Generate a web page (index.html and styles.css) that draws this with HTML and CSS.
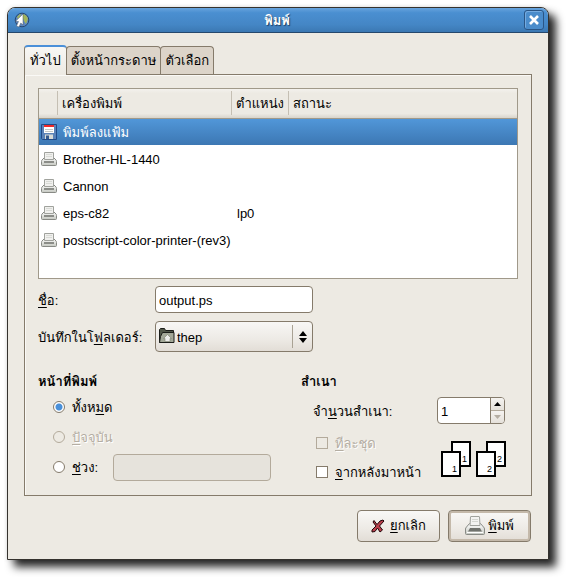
FILE: index.html
```html
<!DOCTYPE html>
<html lang="th">
<head>
<meta charset="utf-8">
<title>พิมพ์</title>
<link rel="stylesheet" href="styles.css">
</head>
<body>
<svg class="defs" aria-hidden="true">
  <defs>
    <linearGradient id="metal" x1="0" y1="0" x2="0" y2="1"><stop offset="0" stop-color="#fff"/><stop offset="1" stop-color="#c4c7c0"/></linearGradient>
    <symbol id="printer-small" viewBox="0 0 16 16">
      <path d="M3.500 6.500L1 9q-.5.5-.5 1.500v3q0 1 1 1h13q1 0 1-1v-3q0-1-.5-1.500l-2.500-2.500z" fill="url(#metal)" stroke="#888a85"/>
      <path d="M3.500 1.500h9v7h-9z" fill="#f0f0ee" stroke="#a0a29d"/>
      <path d="M5 3.500h6M5 5.500h6" stroke="#d8dad5"/>
      <path d="M3 11h10" stroke="#8b8d88" stroke-width="2"/>
    </symbol>
    <symbol id="printer" viewBox="0 0 20 20">
      <path d="M4.500 7.500L1.500 11q-1 1-1 2v4.500q0 1 1 1h17q1 0 1-1V13q0-1-1-2l-3-3.500z" fill="url(#metal)" stroke="#888a85"/>
      <path d="M5.500 1q0-.5.500-.5h8q.5 0 .5.500l.5 8.500H5z" fill="#f3f3f1" stroke="#a0a29d"/>
      <path d="M7 3.500h6M7 5.500h6" stroke="#d4d6d1"/>
      <path d="M5 12h10l2 3.500H3z" fill="#70726d"/>
      <path d="M2 16.500h16" stroke="#fff"/>
    </symbol>
  </defs>
</svg>
<main class="window">
  <header class="titlebar">
    <svg class="app-icon" viewBox="0 0 16 16" aria-hidden="true">
      <circle cx="8" cy="8" r="6.800" fill="#5b86c0" stroke="#26466f"/>
      <path d="M9 2q4 1 5 5l-2 5-2-3-1-3zM3 5l3-3 1 1-3 4z" fill="#a2b45a"/>
      <path d="M9 2L1.500 9.300l3 .2L2.500 14l2.500 1 1.800-4L9 13z" fill="#fff" stroke="#4a5563" stroke-width=".5"/>
    </svg>
    <h1>พิมพ์</h1>
    <button class="close" type="button" aria-label="ปิด">
      <svg viewBox="0 0 12 12" aria-hidden="true"><path d="M2 2l8 8M10 2l-8 8" stroke="#fff" stroke-width="2.600"/></svg>
    </button>
  </header>
  <form class="content">
    <div class="tabs" role="tablist">
      <button class="tab active" type="button" role="tab" aria-selected="true">ทั่วไป</button>
      <button class="tab" type="button" role="tab">ตั้งหน้ากระดาษ</button>
      <button class="tab" type="button" role="tab">ตัวเลือก</button>
    </div>
    <section class="panel">
      <div class="list">
        <table>
          <colgroup><col class="c-icon"><col class="c-name"><col class="c-place"><col></colgroup>
          <thead><tr><th></th><th>เครื่องพิมพ์</th><th>ตำแหน่ง</th><th>สถานะ</th></tr></thead>
          <tbody>
            <tr class="selected"><td><svg viewBox="0 0 16 16" aria-hidden="true">
              <path d="M.5.5h15v15h-14l-1-1z" fill="#5a82b8" stroke="#204a87"/>
              <path d="M3 1h10v8H3z" fill="#fff"/><path d="M3 1h10v2H3z" fill="#ef2929"/>
              <path d="M4 5.500h8M4 7.500h8" stroke="#c5c8c5"/><path d="M4 10.500h8V15H4z" fill="#d9dbd6"/><path d="M5 11.500h3V15H5z" fill="#34598e"/></svg></td><td>พิมพ์ลงแฟ้ม</td><td></td><td></td></tr>
            <tr><td><svg viewBox="0 0 16 16" aria-hidden="true"><use href="#printer-small"/></svg></td><td>Brother-HL-1440</td><td></td><td></td></tr>
            <tr><td><svg viewBox="0 0 16 16" aria-hidden="true"><use href="#printer-small"/></svg></td><td>Cannon</td><td></td><td></td></tr>
            <tr><td><svg viewBox="0 0 16 16" aria-hidden="true"><use href="#printer-small"/></svg></td><td>eps-c82</td><td>lp0</td><td></td></tr>
            <tr><td><svg viewBox="0 0 16 16" aria-hidden="true"><use href="#printer-small"/></svg></td><td>postscript-color-printer-(rev3)</td><td></td><td></td></tr>
          </tbody>
        </table>
      </div>
      <div class="fields">
        <label for="name"><u>ชื่</u>อ:</label>
        <input class="text" id="name" type="text" value="output.ps">
        <label for="folder">บันทึกในโ<u>ฟ</u>ลเดอร์:</label>
        <div class="combo">
          <select id="folder"><option>thep</option></select>
          <svg class="folder" viewBox="0 0 16 16" aria-hidden="true">
            <path d="M.5 14.500v-13l1-1h4l1 2h8v12z" fill="#4f5547" stroke="#1c1e1a"/>
            <path d="M3.500 4.500h11.500v10H.5l1-6z" fill="#a3a898" stroke="#1c1e1a"/>
            <path d="M8.500 6.500l4 4h-1.500v3H6v-3H4.500z" fill="#eeeeec" stroke="#7b806f" stroke-width=".6"/>
          </svg>
          <svg class="arrows" viewBox="0 0 8 12" aria-hidden="true"><path d="M4 0l4 5H0zM4 12l4-5H0z"/></svg>
        </div>
      </div>
      <div class="options">
        <fieldset>
          <legend>หน้าที่พิมพ์</legend>
          <div class="choices">
            <div class="choice"><input id="all" type="radio" name="pages" checked><label for="all">ทั้งห<u>ม</u>ด</label></div>
            <div class="choice"><input id="current" type="radio" name="pages" disabled><label for="current"><u>ปั</u>จจุบัน</label></div>
            <div class="choice"><input id="range" type="radio" name="pages"><label class="range-label" for="range"><u>ช่</u>วง:</label><input class="text" type="text" aria-label="ช่วง" disabled></div>
          </div>
        </fieldset>
        <fieldset>
          <legend>สำเนา</legend>
          <div class="copies">
            <label for="copies">จำ<u>น</u>วนสำเนา:</label>
            <div class="spin">
              <input id="copies" type="text" inputmode="numeric" value="1">
              <div class="steps">
                <button type="button" aria-label="เพิ่ม"><svg viewBox="0 0 7 4"><path d="M3.500 0L7 4H0z"/></svg></button>
                <button type="button" aria-label="ลด" disabled><svg viewBox="0 0 7 4"><path d="M0 0h7L3.500 4z"/></svg></button>
              </div>
            </div>
          </div>
          <div class="order">
            <div class="checks">
              <div class="choice"><input id="collate" type="checkbox" disabled><label for="collate"><u>ที</u>ละชุด</label></div>
              <div class="choice"><input id="reverse" type="checkbox"><label for="reverse"><u>จ</u>ากหลังมาหน้า</label></div>
            </div>
            <svg class="sheets" viewBox="0 0 65 36" aria-hidden="true">
              <g fill="#fff" stroke="#000" stroke-width="2">
                <path d="M11 1h18v24H11z"/><path d="M1 11h18v24H1z"/><path d="M46 1h18v24H46z"/><path d="M36 11h18v24H36z"/>
              </g>
              <g class="digits"><text x="21" y="21">1</text><text x="11" y="31">1</text><text x="56" y="21">2</text><text x="46" y="31">2</text></g>
            </svg>
          </div>
        </fieldset>
      </div>
    </section>
    <footer class="actions">
      <button class="action" type="button">
        <svg class="cross" viewBox="0 0 14 14" aria-hidden="true"><path d="M3 1.500l3 4 3-3.500 3-1 1 1-4.500 5 3 4-2.500 2L6.500 9 4 12.500l-3 .5v-2l4-4-3-4z" fill="#b9404d" stroke="#210509" stroke-width="1"/></svg>
        <span><u>ย</u>กเลิก</span>
      </button>
      <button class="action default" type="submit">
        <svg class="print" viewBox="0 0 20 20" aria-hidden="true"><use href="#printer"/></svg>
        <span><u>พิ</u>มพ์</span>
      </button>
    </footer>
  </form>
</main>
</body>
</html>
```
FILE: styles.css
```css
* { box-sizing: border-box; }
body {
  margin: 0;
  padding: 7px 23px 23px 7px;
  background: #fff;
  color: #000;
  font: 13px/20px "Liberation Sans", "Loma", "Noto Sans Thai", sans-serif;
}
button, input, select { font: inherit; color: inherit; margin: 0; }
svg { display: block; }
.defs { position: absolute; width: 0; height: 0; }
u { text-underline-offset: 2px; text-decoration-skip-ink: none; }

.window {
  border: 1px solid #35322e;
  border-radius: 8px 8px 0 0;
  background: #edeae3;
  box-shadow: 7px 7px 9px rgba(0, 0, 0, .85), 0 0 4px rgba(0, 0, 0, .12);
}
.titlebar {
  display: flex;
  align-items: center;
  height: 25px;
  padding: 0 4px 0 6px;
  border-bottom: 1px solid #25486d;
  border-radius: 7px 7px 0 0;
  background: linear-gradient(#67a3dd, #4a8fd1 20%, #4486c5 70%, #3b78b3);
}
.titlebar h1 {
  flex: 1;
  margin: 0;
  padding-top: 2px;
  color: #fff;
  font-size: 13px;
  line-height: 20px;
  text-align: center;
  text-shadow: 1px 1px 1px #1c3f66;
}
.app-icon { width: 16px; height: 16px; }
.close {
  display: grid;
  place-items: center;
  width: 20px;
  height: 20px;
  padding: 0;
  border: 1px solid #2a5585;
  border-radius: 3px;
  background: #4a8ccb;
  box-shadow: inset 1px 1px #75abe0;
}
.close svg { width: 12px; height: 12px; }

.content { padding: 12px 16px 17px; }
.tabs { display: flex; align-items: flex-end; }
.tab {
  height: 28px;
  margin: 0 0 0 -1px;
  padding: 0 4px;
  border: 1px solid #857b6b;
  border-bottom: 0;
  border-radius: 4px 4px 0 0;
  background: #dcd4c9;
  white-space: nowrap;
}
.tab.active {
  position: relative;
  height: 30px;
  margin: 0 0 -1px;
  padding: 0 5px;
  border-top: 2px solid #4a90d9;
  background: linear-gradient(#f8f7f4, #edeae3);
}
.panel {
  padding: 13px 13px 9px;
  border: 1px solid #857b6b;
  box-shadow: inset 1px 1px #faf9f6;
}

.list {
  min-height: 191px;
  border: 1px solid #a0998a;
  background: #fff;
}
table { width: 100%; border-collapse: collapse; table-layout: fixed; }
.c-icon { width: 19px; }
.c-name { width: 174px; }
.c-place { width: 57px; }
th {
  height: 29px;
  padding: 2px 4px 0;
  border-bottom: 1px solid #a0998a;
  background:
    linear-gradient(#c5bfb3, #c5bfb3) right / 1px 24px no-repeat,
    linear-gradient(#f3f1ed, #edeae3 15%, #edeae3 85%, #d8d4cb);
  font-weight: normal;
  text-align: left;
}
th:last-child { background: linear-gradient(#f3f1ed, #edeae3 15%, #edeae3 85%, #d8d4cb); }
td { height: 27px; padding: 2px 0 0 5px; white-space: nowrap; }
td:first-child { padding: 0 0 0 2px; }
td svg { width: 16px; height: 16px; }
.selected { background: linear-gradient(#5298da, #3c77b3); color: #fff; }

.fields {
  display: grid;
  grid-template-columns: 109px 158px;
  gap: 8px;
  align-items: center;
  margin-top: 7px;
}
.fields label { white-space: nowrap; padding-top: 2px; }
.text {
  width: 158px;
  height: 27px;
  padding: 2px 3px 0;
  border: 1px solid #857b6b;
  border-radius: 4px;
  background: #fff;
}
.text:disabled { border-color: #b3aa9b; background: #e6e3dc; }
.combo { position: relative; }
select {
  display: block;
  width: 100%;
  height: 31px;
  padding: 2px 30px 0 21px;
  border: 1px solid #857b6b;
  border-radius: 4px;
  appearance: none;
  background:
    linear-gradient(#a9a294, #a9a294) right 19px center / 1px 23px no-repeat,
    linear-gradient(#f8f7f5, #edeae5 60%, #e2ddd6);
}
.folder { position: absolute; left: 4px; top: 7px; width: 16px; height: 16px; }
.arrows { position: absolute; right: 6px; top: 10px; width: 8px; height: 12px; }

.options {
  display: grid;
  grid-template-columns: 263px 1fr;
  margin-top: 20px;
}
fieldset { min-width: 0; margin: 0; padding: 0; border: 0; }
legend { padding: 0; font-weight: bold; }
.choice { display: flex; align-items: center; min-height: 29px; white-space: nowrap; }
.choices { padding: 0 0 0 15px; }
.choices .choice { min-height: 30px; }
.choice label { margin-left: 7px; padding-top: 2px; }
.range-label { width: 41px; }
input[type="radio"], input[type="checkbox"] {
  flex: none;
  width: 12px;
  height: 12px;
  border: 1px solid #857b6b;
  appearance: none;
  background: #fff;
}
input[type="radio"] { border-radius: 50%; }
input[type="radio"]:checked { background: radial-gradient(circle, #4a90d9 3px, #fff 4px); }
.choice input:disabled:not(.text) { border-color: #b3aa9b; background: #edeae3; }
input:disabled + label { color: #b5aea3; text-shadow: 1px 1px #fff; }

.copies {
  display: flex;
  align-items: center;
  justify-content: space-between;
  padding: 5px 13px 0 12px;
}
.copies label { padding-top: 2px; }
.spin {
  display: flex;
  width: 68px;
  height: 27px;
  border: 1px solid #857b6b;
  border-radius: 4px;
  background: #fff;
  overflow: hidden;
}
.spin input { flex: 1; min-width: 0; padding: 2px 3px 0; border: 0; background: none; }
.steps { display: grid; width: 14px; border-left: 1px solid #857b6b; }
.steps button {
  display: grid;
  place-items: center;
  min-height: 0;
  padding: 0;
  border: 0;
  background: linear-gradient(#f5f3f0, #e5e1da);
}
.steps button + button { border-top: 1px solid #b3aa9b; fill: #b5aea3; }
.steps svg { width: 7px; height: 4px; }
.order {
  display: flex;
  align-items: center;
  justify-content: space-between;
  margin-top: 4px;
  padding: 0 12px 0 15px;
}
.sheets { width: 65px; height: 36px; margin-top: 4px; }
.digits { font-size: 9px; }

.actions {
  display: flex;
  justify-content: flex-end;
  gap: 8px;
  margin-top: 14px;
  padding-right: 1px;
}
.action {
  display: flex;
  align-items: center;
  justify-content: center;
  gap: 5px;
  width: 83px;
  height: 32px;
  padding: 0;
  border: 1px solid #857b6b;
  border-radius: 4px;
  background: linear-gradient(#f9f8f6, #edeae5 60%, #e2ddd6);
}
.action.default { gap: 3px; box-shadow: inset 0 0 0 2px #c4b9aa; }
.cross { width: 14px; height: 14px; }
.print { width: 20px; height: 20px; }
```
